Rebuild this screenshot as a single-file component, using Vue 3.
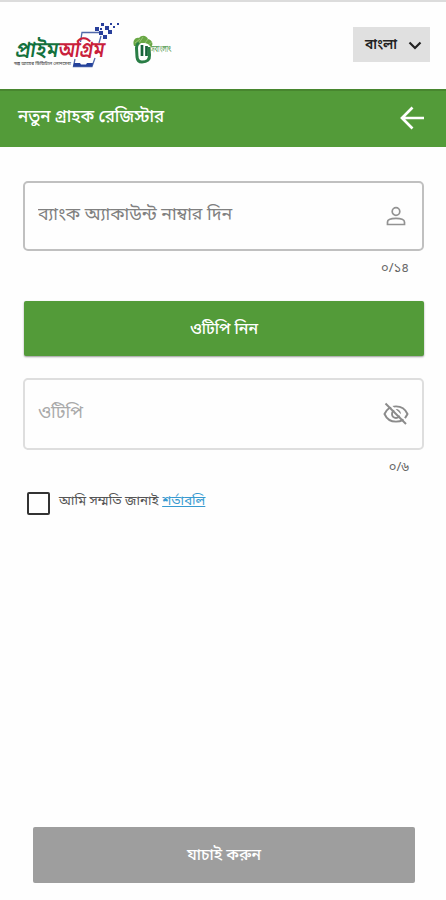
<script setup>
import { ref } from 'vue'

const account = ref('')
const otp = ref('')
const agreed = ref(false)
const pixels = [
  [101, 23, 3], [110, 23, 2], [117, 23, 2],
  [95, 27, 4], [105, 26, 4], [113, 26, 2],
  [99, 31, 4], [108, 30, 4], [103, 35, 4], [100, 28, 2]
]
</script>

<template>
  <main class="screen">
    <header class="top">
      <svg class="brand" viewBox="0 0 180 88" aria-label="প্রাইম অগ্রিম">
        <path d="M80.500 42L82 32.500H100M101 36L99 43M75 59L73.500 66.500H92L95 58" fill="none" stroke="#5069aa" stroke-width="1.300" />
        <path d="M74 63H80L81 64.500H86L87 63H93L92 66.500H73Z" fill="#24429b" />
        <rect v-for="p in pixels" :key="p.join()" :x="p[0]" :y="p[1]" :width="p[2]" :height="p[2]" fill="#293f9b" />
        <g transform="translate(14.500 57) skewX(-9)" class="wordmark">
          <text x="0" y="0" fill="#13713d" textLength="43" lengthAdjust="spacingAndGlyphs">প্রাইম</text>
          <text x="43" y="0" fill="#c9203b" textLength="46" lengthAdjust="spacingAndGlyphs">অগ্রিম</text>
        </g>
        <text class="tagline" x="14" y="65" textLength="57" lengthAdjust="spacingAndGlyphs">স্বল্প আয়ের ডিজিটাল লোনসেবা</text>
        <path d="M134 46C132 40 136 37 139 38C142 34 147 36 148 39C152 40 154 44 151 47L148 44L145 43L141 43L138 46Z" fill="#68a744" />
        <path d="M135 43L140 39M139 43L143 37M145 43L148 39M148 45L152 42" stroke="#c2dea9" stroke-width=".500" />
        <path d="M139 44Q137 43 136.500 48L137 57Q137.500 62 142 62Q150 62 149.500 55L149 47" fill="none" stroke="#297d45" stroke-width="3" />
        <path d="M142 45V56M146.500 46V56" stroke="#17633a" stroke-width="2.700" />
        <text class="partner" x="151" y="51.500" textLength="20" lengthAdjust="spacingAndGlyphs">সবাংলাৎ</text>
      </svg>
      <button class="language">
        <span>বাংলা</span>
        <svg viewBox="0 0 14 9"><path d="M1.500 1.500L7 7L12.500 1.500" /></svg>
      </button>
    </header>
    <section class="title">
      <h1>নতুন গ্রাহক রেজিস্টার</h1>
      <svg viewBox="0 0 24 24"><path d="M12.500 1.500L2 12L12.500 22.500M2 12H24" /></svg>
    </section>
    <form class="form" @submit.prevent>
      <label class="field">
        <input v-model="account" class="account" placeholder="ব্যাংক অ্যাকাউন্ট নাম্বার দিন" />
        <svg class="person" viewBox="0 0 20 20"><circle cx="10" cy="5.500" r="3.800" /><path d="M1.500 18.500V16C1.500 13.500 5 12.300 10 12.300S18.500 13.500 18.500 16V18.500Z" /></svg>
      </label>
      <p class="count">০/১৪</p>
      <button class="primary"><span>ওটিপি নিন</span></button>
      <label class="field otp">
        <input v-model="otp" placeholder="ওটিপি" />
        <svg class="eye" viewBox="0 0 26 24"><path d="M1.500 12C6 1.800 20 1.800 24.500 12C20 22.200 6 22.200 1.500 12Z" /><circle cx="13" cy="12" r="4" /><path class="cut" d="M4.500 .500L25 20.500" /><path d="M2.500 1.500L23 22" /></svg>
      </label>
      <p class="count">০/৬</p>
      <label class="consent"><input v-model="agreed" type="checkbox" /><span class="agree">আমি সম্মতি জানাই <a>শর্তাবলি</a></span></label>
    </form>
    <button class="verify"><span>যাচাই করুন</span></button>
  </main>
</template>

<style>
body { background: #fefefe; }
</style>
<style scoped>
* { box-sizing: border-box; }
.screen { height: 900px; display: flex; flex-direction: column; font-family: "Noto Sans Bengali", "Noto Sans", sans-serif; background: #fefefe; overflow: hidden; }
button, input { font-family: inherit; }
button { border: 0; padding: 0; }
.top { height: 89px; flex: none; border-top: 2px solid #dcdcdc; display: flex; justify-content: space-between; padding-right: 16px; }
.brand { width: 180px; height: 88px; margin-top: -2px; overflow: visible; }
.wordmark { font-size: 22px; font-weight: 600; }
.tagline { font-size: 5px; font-weight: 500; fill: #555; }
.partner { font-size: 9px; fill: #529a50; }
.language { width: 77px; height: 35px; margin-top: 25px; background: #e0e0e0; display: flex; align-items: center; justify-content: space-between; padding: 0 8px 0 12px; font-size: 13.7px; font-weight: 600; color: #222; }
.language span { padding-top: 1px; }
.language svg { width: 14px; height: 9px; fill: none; stroke: #222; stroke-width: 2.200; margin-top: 2px; }
.title { height: 58px; flex: none; background: #539b39; border-top: 2px solid #48862f; display: flex; align-items: center; justify-content: space-between; padding: 0 22px 2px 18px; color: #fff; }
h1 { margin: 0; font-size: 16.9px; font-weight: 500; line-height: 24px; }
.title svg { width: 24px; height: 24px; fill: none; stroke: #fff; stroke-width: 2.700; }
.form { padding: 34px 22px 0 23px; }
.field { height: 70px; border: 2px solid #c0c0c0; border-radius: 5px; display: flex; align-items: center; padding: 0 16px 0 13px; }
.field input { width: 300px; border: 0; padding: 0; outline: 0; background: none; font-size: 17.75px; height: 34px; margin-top: -2px; color: #555; }
.field input::placeholder { color: #808080; opacity: 1; }
.field svg { margin-left: auto; fill: none; stroke: #929292; stroke-width: 1.700; flex: none; }
.person { width: 20px; height: 20px; }
.count { margin: 0 15px 0 0; padding-top: 8px; text-align: right; height: 50px; font-size: 13px; line-height: 20px; color: #666; }
.primary { width: 400px; height: 55px; margin-left: 1px; display: flex; align-items: center; justify-content: center; background: #539b39; color: #fff; font-size: 15.8px; font-weight: 500; border-radius: 2px; box-shadow: 0 1px 2px #999; }
.primary span, .verify span { display: inline-block; padding-top: 2px; }
.otp { height: 72px; margin-top: 22px; border-color: #dedede; }
.otp input::placeholder { color: #aaa; }
.otp svg { width: 26px; height: 24px; margin-right: -3px; stroke: #8b8b8b; stroke-width: 1.900; }
.eye .cut { stroke: #fefefe; stroke-width: 2; }
.otp + .count { height: 41px; }
.consent { display: flex; align-items: center; gap: 9px; margin-left: 4px; height: 24px; font-size: 13.3px; color: #555; }
.agree { margin-top: -4px; }
.consent input { appearance: none; width: 23px; height: 23px; margin: 0; border: 2px solid #333; border-radius: 2px; }
.consent a { color: #379ad0; text-decoration: underline; }
.verify { width: 382px; height: 56px; flex: none; margin: auto 0 17px 33px; border-radius: 2px; background: #9e9e9e; color: #fff; font-size: 15.7px; font-weight: 500; }
</style>
